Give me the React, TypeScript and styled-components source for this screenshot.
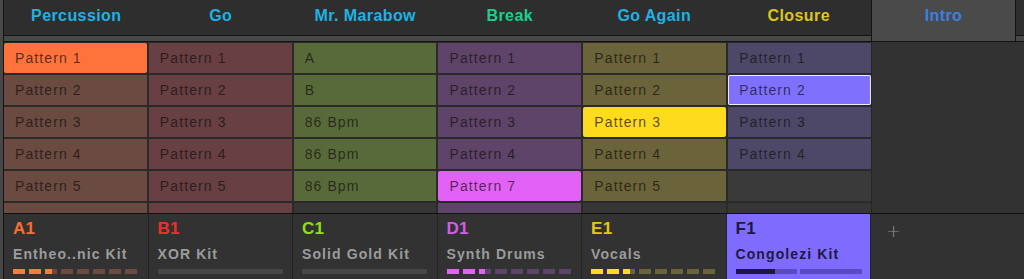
import React from "react";
import styled, { createGlobalStyle } from "styled-components";

const Global = createGlobalStyle`
  html, body { margin: 0; padding: 0; background: #323232; overflow: hidden; }
  body { font-family: "Liberation Sans", Arial, sans-serif; }
`;

const Root = styled.div`
  width: 1024px;
  height: 279px;
  display: flex;
  flex-direction: column;
  border-left: 3px solid #474747;
  box-sizing: border-box;
  overflow: hidden;
`;

const Inner = styled.div`
  flex: 1;
  display: flex;
  flex-direction: column;
  border-left: 1px solid #151515;
  min-height: 0;
`;

const TabBar = styled.div`
  display: flex;
  height: 41px;
  background: #484848;
  border-bottom: 1px solid #141414;
  align-items: flex-start;
`;

const Tab = styled.div<{ $color: string; $active?: boolean }>`
  width: ${(p) => (p.$active ? "145px" : "144.5px")};
  box-sizing: border-box;
  height: ${(p) => (p.$active ? "41px" : "36px")};
  background: ${(p) => (p.$active ? "#4a4a4a" : "#2e2e2e")};
  border-bottom: ${(p) => (p.$active ? "none" : "1px solid #141414")};
  border-left: ${(p) => (p.$active ? "1px solid #141414" : "none")};
  border-right: ${(p) => (p.$active ? "1px solid #141414" : "none")};
  color: ${(p) => p.$color};
  font-size: 16px;
  font-weight: bold;
  letter-spacing: 0.4px;
  line-height: 20px;
  padding-top: 6px;
  text-align: center;
  white-space: nowrap;
`;

const TabFill = styled.div`
  flex: 1;
  height: 36px;
  box-sizing: border-box;
  background: #2e2e2e;
  border-bottom: 1px solid #141414;
`;

const GridArea = styled.div`
  height: 171px;
  overflow: hidden;
  display: flex;
  background: #323232;
`;

const Grid = styled.div`
  width: 867px;
  padding-top: 1px;
  display: grid;
  grid-template-columns: repeat(6, 1fr);
  grid-auto-rows: 30px;
  gap: 2px;
  background: #2a2a2a;
  border-right: 1px solid #262626;
  align-content: start;
`;

const Cell = styled.div<{ $bg: string; $sel?: boolean; $ring?: boolean }>`
  background: ${(p) => p.$bg};
  border-radius: ${(p) => (p.$sel ? "2px" : "0")};
  box-shadow: ${(p) => (p.$ring ? "inset 0 0 0 1px #ecebff" : "none")};
  color: rgba(20, 16, 16, 0.72);
  font-size: 14px;
  letter-spacing: 1.1px;
  line-height: 30px;
  padding-left: 11px;
  white-space: nowrap;
  overflow: hidden;
`;

const BottomBar = styled.div`
  flex: 1;
  display: flex;
  border-top: 1px solid #121212;
  background: #323232;
`;

const Slot = styled.div<{ $bg?: string }>`
  width: 144.5px;
  box-sizing: border-box;
  padding: 5px 0 0 9px;
  background: ${(p) => p.$bg || "#323232"};
  border-right: 1px solid #242424;
  display: flex;
  flex-direction: column;
`;

const SlotLabel = styled.div<{ $color: string }>`
  color: ${(p) => p.$color};
  font-size: 17px;
  font-weight: bold;
  line-height: 20px;
  letter-spacing: 0.3px;
`;

const SlotName = styled.div<{ $color: string }>`
  color: ${(p) => p.$color};
  font-size: 14px;
  font-weight: bold;
  line-height: 18px;
  letter-spacing: 1.1px;
  margin-top: 6px;
  white-space: nowrap;
`;

const Meter = styled.div`
  display: flex;
  gap: 4px;
  margin-top: 6px;
  height: 5px;
  width: 124px;
`;

const Segment = styled.div<{ $on: string; $off: string }>`
  flex: 1;
  background: ${(p) => p.$off};
  position: relative;
  overflow: hidden;
`;

const SegFill = styled.div<{ $on: string }>`
  height: 100%;
  background: ${(p) => p.$on};
`;

const Bar = styled.div`
  margin-top: 6px;
  height: 5px;
  width: 125px;
  background: #474747;
`;

const KitMeter = styled.div`
  display: flex;
  gap: 3px;
  margin-top: 6px;
  height: 5px;
  width: 126px;
`;

const KitSeg = styled.div`
  flex: 1;
  background: #5a4bc2;
  display: flex;
`;

const KitFill = styled.div`
  height: 100%;
  background: #1b1838;
`;

const AddSlot = styled.div`
  padding: 7px 0 0 15px;
  color: #8c8c8c;
  font-size: 18px;
  line-height: 20px;
  font-family: "DejaVu Sans", sans-serif;
  font-weight: 300;
`;

const tabs = [
  { name: "Percussion", color: "#1eb2e4" },
  { name: "Go", color: "#1eb2e4" },
  { name: "Mr. Marabow", color: "#1eb2e4" },
  { name: "Break", color: "#18d08f" },
  { name: "Go Again", color: "#1eb2e4" },
  { name: "Closure", color: "#dcc617" },
];

type C = { t?: string; sel?: string; ring?: boolean; empty?: boolean };
const columns: { bg: string; cells: C[] }[] = [
  {
    bg: "#6a4a41",
    cells: [
      { t: "Pattern 1", sel: "#ff723c" },
      { t: "Pattern 2" },
      { t: "Pattern 3" },
      { t: "Pattern 4" },
      { t: "Pattern 5" },
      { t: "Pattern 6" },
    ],
  },
  {
    bg: "#683f42",
    cells: [
      { t: "Pattern 1" },
      { t: "Pattern 2" },
      { t: "Pattern 3" },
      { t: "Pattern 4" },
      { t: "Pattern 5" },
      { t: "Pattern 6" },
    ],
  },
  {
    bg: "#586a39",
    cells: [{ t: "A" }, { t: "B" }, { t: "86 Bpm" }, { t: "86 Bpm" }, { t: "86 Bpm" }, { empty: true }],
  },
  {
    bg: "#5e4468",
    cells: [
      { t: "Pattern 1" },
      { t: "Pattern 2" },
      { t: "Pattern 3" },
      { t: "Pattern 4" },
      { t: "Pattern 7", sel: "#e262f5" },
      { t: "Pattern 8" },
    ],
  },
  {
    bg: "#6b6339",
    cells: [
      { t: "Pattern 1" },
      { t: "Pattern 2" },
      { t: "Pattern 3", sel: "#ffdb1d" },
      { t: "Pattern 4" },
      { t: "Pattern 5" },
      { empty: true },
    ],
  },
  {
    bg: "#4d4868",
    cells: [
      { t: "Pattern 1" },
      { t: "Pattern 2", sel: "#8070fe", ring: true },
      { t: "Pattern 3" },
      { t: "Pattern 4" },
      { empty: true },
      { empty: true },
    ],
  },
];

type SlotData = {
  label: string;
  labelColor: string;
  name: string;
  meter: "seg" | "bar" | "kit";
  on?: string;
  off?: string;
};

const slots: SlotData[] = [
  { label: "A1", labelColor: "#ff6a2e", name: "Entheo..nic Kit", meter: "seg", on: "#ff7a3e", off: "#6a4a41" },
  { label: "B1", labelColor: "#ee302c", name: "XOR Kit", meter: "bar" },
  { label: "C1", labelColor: "#8fe010", name: "Solid Gold Kit", meter: "bar" },
  { label: "D1", labelColor: "#d25ee8", name: "Synth Drums", meter: "seg", on: "#e262f5", off: "#5e4468" },
  { label: "E1", labelColor: "#e6c812", name: "Vocals", meter: "seg", on: "#ffdb1d", off: "#6b6339" },
];

const levels = [1, 1, 0.55, 0, 0, 0, 0, 0];

function SegMeter({ on, off }: { on: string; off: string }) {
  return (
    <Meter>
      {levels.map((l, i) => (
        <Segment key={i} $on={on} $off={off}>
          <SegFill $on={on} style={{ width: `${l * 100}%` }} />
        </Segment>
      ))}
    </Meter>
  );
}

export default function App() {
  const rows = [0, 1, 2, 3, 4, 5];
  return (
    <>
      <Global />
      <Root>
        <Inner>
          <TabBar>
            {tabs.map((t) => (
              <Tab key={t.name} $color={t.color}>
                {t.name}
              </Tab>
            ))}
            <Tab $color="#3d80e2" $active>
              Intro
            </Tab>
            <TabFill />
          </TabBar>
          <GridArea>
            <Grid>
              {rows.map((r) =>
                columns.map((col, ci) => {
                  const c = col.cells[r];
                  if (c.empty) return <Cell key={`${r}-${ci}`} $bg={r === 5 ? "#363636" : "#3a3a3a"} />;
                  return (
                    <Cell key={`${r}-${ci}`} $bg={c.sel || col.bg} $sel={!!c.sel} $ring={c.ring}>
                      {c.t}
                    </Cell>
                  );
                })
              )}
            </Grid>
          </GridArea>
          <BottomBar>
            {slots.map((s) => (
              <Slot key={s.label}>
                <SlotLabel $color={s.labelColor}>{s.label}</SlotLabel>
                <SlotName $color="#9c9c9c">{s.name}</SlotName>
                {s.meter === "seg" ? <SegMeter on={s.on!} off={s.off!} /> : <Bar />}
              </Slot>
            ))}
            <Slot $bg="#7f6cfe">
              <SlotLabel $color="#1d1a40">F1</SlotLabel>
              <SlotName $color="#1d1a40">Congolezi Kit</SlotName>
              <KitMeter>
                <KitSeg>
                  <KitFill style={{ width: "64%" }} />
                </KitSeg>
                <KitSeg />
              </KitMeter>
            </Slot>
            <AddSlot>+</AddSlot>
          </BottomBar>
        </Inner>
      </Root>
    </>
  );
}
